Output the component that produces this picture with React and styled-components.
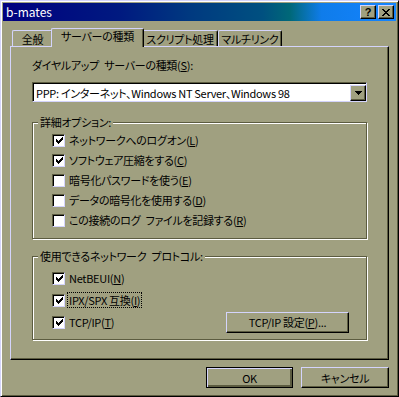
import React from 'react'
import styled, { createGlobalStyle, css } from 'styled-components'

const FACE = '#a0a080'
const LIGHT = '#d4d4fc'
const WHITE = '#ffffff'
const SHADOW = '#5c5c40'
const DARK = '#000000'

const GlobalStyle = createGlobalStyle`
  html, body {
    margin: 0;
    padding: 0;
    background: ${FACE};
  }
  body {
    font-family: "Noto Sans CJK JP", "Liberation Sans", sans-serif;
    font-size: 11px;
    letter-spacing: -0.3px;
    color: #000;
    font-feature-settings: "palt" 1;
  }
  * {
    box-sizing: border-box;
  }
`

const raised = css`
  border: 1px solid;
  border-color: ${LIGHT} ${DARK} ${DARK} ${LIGHT};
  box-shadow: inset -1px -1px 0 ${SHADOW};
  background: ${FACE};
`

const sunken = css`
  border: 1px solid;
  border-color: ${SHADOW} ${LIGHT} ${LIGHT} ${SHADOW};
  box-shadow: inset 1px 1px 0 ${DARK};
`

const Window = styled.div`
  width: 399px;
  height: 397px;
  background: ${FACE};
  border: 1px solid;
  border-color: ${LIGHT} ${DARK} ${DARK} ${LIGHT};
  box-shadow: inset 1px 1px 0 ${WHITE}, inset -1px -1px 0 ${SHADOW};
  padding: 2px;
  display: flex;
  flex-direction: column;
`

const TitleBar = styled.div`
  height: 18px;
  flex: none;
  display: flex;
  align-items: center;
  padding: 0 2px 0 2px;
  background: linear-gradient(
    to right,
    #000080 0%,
    #001a80 30%,
    #003a80 48%,
    #005080 66%,
    #006878 73%,
    #0f7cea 81%,
    #1484ff 100%
  );
  color: #fff;
`

const TitleText = styled.span`
  flex: 1;
  font-size: 12px;
  letter-spacing: 0;
  line-height: 14px;
  padding-left: 1px;
`

const TitleButtons = styled.div`
  display: flex;
  gap: 2px;
`

const TitleButton = styled.div`
  ${raised}
  width: 16px;
  height: 14px;
  display: flex;
  align-items: center;
  justify-content: center;
  color: #000;
  font-family: "Liberation Sans", sans-serif;
  font-weight: bold;
  font-size: 11px;
  line-height: 11px;
`

const Body = styled.div`
  flex: 1;
  display: flex;
  flex-direction: column;
  padding: 7px 7px 0 7px;
`

const TabRow = styled.div`
  height: 18px;
  display: flex;
  align-items: flex-end;
  padding-left: 2px;
  position: relative;
  z-index: 1;
`

const Tab = styled.div`
  width: ${p => p.$w}px;
  height: 16px;
  border-top: 1px solid ${LIGHT};
  border-left: 1px solid ${LIGHT};
  border-right: 1px solid ${DARK};
  box-shadow: inset -1px 0 0 ${SHADOW};
  border-radius: 2px 2px 0 0;
  background: ${FACE};
  text-align: center;
  line-height: 14px;
  padding-top: 1px;
  white-space: nowrap;
  ${p =>
    p.$active &&
    css`
      height: 19px;
      margin: 0 -2px -1px;
      width: ${p.$w + 4}px;
      padding-top: 0;
      position: relative;
    `}
`

const Panel = styled.div`
  ${raised}
  height: 314px;
  flex: none;
  padding: 11px 21px 0 21px;
  display: flex;
  flex-direction: column;
`

const FieldLabel = styled.div`
  line-height: 14px;
  margin-bottom: 10px;
`

const Key = styled.span`
  text-decoration: underline;
  text-underline-offset: 1px;
`

const Combo = styled.div`
  ${sunken}
  height: 20px;
  background: ${WHITE};
  display: flex;
  align-items: center;
  padding: 1px 0 0 3px;
  margin-bottom: 20px;
`

const ComboText = styled.span`
  flex: 1;
  line-height: 14px;
  white-space: nowrap;
`

const DropButton = styled.div`
  ${raised}
  width: 16px;
  height: 16px;
  display: flex;
  align-items: center;
  justify-content: center;
`

const Group = styled.div`
  position: relative;
  border: 1px solid ${SHADOW};
  box-shadow: 1px 1px 0 ${WHITE}, inset 1px 1px 0 ${WHITE};
  height: ${p => p.$h}px;
  padding: ${p => p.$pt}px 17px 0 19px;
  margin-top: ${p => p.$mt || 0}px;
`

const Legend = styled.span`
  position: absolute;
  top: -8px;
  left: 5px;
  padding: 0 2px;
  background: ${FACE};
  line-height: 14px;
  white-space: nowrap;
`

const Row = styled.div`
  height: ${p => p.$h}px;
  display: flex;
  align-items: center;
`

const Box = styled.span`
  ${sunken}
  width: 13px;
  height: 13px;
  flex: none;
  background: ${WHITE};
  display: flex;
  align-items: center;
  justify-content: center;
  padding: 1px 0 0 1px;
`

const RowLabel = styled.span`
  margin-left: 4px;
  line-height: 14px;
  white-space: nowrap;
  ${p =>
    p.$focus &&
    css`
      outline: 1px dotted #000;
      outline-offset: 0;
      padding: 0 1px;
      margin-left: 3px;
    `}
`

const PushButton = styled.div`
  ${raised}
  width: ${p => p.$w}px;
  height: 21px;
  display: flex;
  align-items: center;
  justify-content: center;
  line-height: 14px;
  margin-left: ${p => (p.$push ? 'auto' : '0')};
  ${p =>
    p.$default &&
    css`
      border-color: ${DARK};
      box-shadow: inset 1px 1px 0 ${LIGHT}, inset -1px -1px 0 ${SHADOW},
        inset -2px -2px 0 ${SHADOW};
    `}
`

const Footer = styled.div`
  flex: 1;
  display: flex;
  justify-content: flex-end;
  gap: 8px;
  padding: 7px 0 0 0;
`

const CheckMark = () => (
  <svg width="7" height="7" viewBox="0 0 7 7" shapeRendering="crispEdges">
    <path
      d="M0 2h1v3H0z M1 3h1v3H1z M2 4h1v3H2z M3 3h1v3H3z M4 2h1v3H4z M5 1h1v3H5z M6 0h1v3H6z"
      fill="#000"
    />
  </svg>
)

const Checkbox = ({ checked }) => <Box>{checked && <CheckMark />}</Box>

const CheckRow = ({ h, checked, focus, children, extra }) => (
  <Row $h={h}>
    <Checkbox checked={checked} />
    <RowLabel $focus={focus}>{children}</RowLabel>
    {extra}
  </Row>
)

const options = [
  { text: 'ネットワークへのログオン', key: 'L', checked: true },
  { text: 'ソフトウェア圧縮をする', key: 'C', checked: true },
  { text: '暗号化パスワードを使う', key: 'E', checked: false },
  { text: 'データの暗号化を使用する', key: 'D', checked: false },
  { text: 'この接続のログ\u2002ファイルを記録する', key: 'R', checked: false },
]

export default function App() {
  return (
    <>
      <GlobalStyle />
      <Window>
        <TitleBar>
          <TitleText>b-mates</TitleText>
          <TitleButtons>
            <TitleButton>?</TitleButton>
            <TitleButton>
              <svg width="8" height="7" viewBox="0 0 8 7" shapeRendering="crispEdges">
                <path
                  d="M0 0h2v1H0z M6 0h2v1H6z M1 1h2v1H1z M5 1h2v1H5z M2 2h4v1H2z M3 3h2v1H3z M2 4h4v1H2z M1 5h2v1H1z M5 5h2v1H5z M0 6h2v1H0z M6 6h2v1H6z"
                  fill="#000"
                />
              </svg>
            </TitleButton>
          </TitleButtons>
        </TitleBar>
        <Body>
          <TabRow>
            <Tab $w={41}>全般</Tab>
            <Tab $w={89} $active>
              サーバーの種類
            </Tab>
            <Tab $w={76}>スクリプト処理</Tab>
            <Tab $w={64}>マルチリンク</Tab>
          </TabRow>
          <Panel>
            <FieldLabel>
              ダイヤルアップ{'\u2002'}サーバーの種類(<Key>S</Key>):
            </FieldLabel>
            <Combo>
              <ComboText>PPP: インターネット、Windows NT Server、Windows 98</ComboText>
              <DropButton>
                <svg width="7" height="4" viewBox="0 0 7 4" shapeRendering="crispEdges">
                  <path d="M0 0h7v1H0z M1 1h5v1H1z M2 2h3v1H2z M3 3h1v1H3z" fill="#000" />
                </svg>
              </DropButton>
            </Combo>
            <Group $h={117} $pt={7}>
              <Legend>詳細オプション:</Legend>
              {options.map(o => (
                <CheckRow key={o.key} h={20} checked={o.checked}>
                  {o.text}(<Key>{o.key}</Key>)
                </CheckRow>
              ))}
            </Group>
            <Group $h={84} $pt={10} $mt={17}>
              <Legend>使用できるネットワーク{'\u2002'}プロトコル:</Legend>
              <CheckRow h={22} checked>
                NetBEUI(<Key>N</Key>)
              </CheckRow>
              <CheckRow h={22} checked focus>
                IPX/SPX 互換(<Key>I</Key>)
              </CheckRow>
              <CheckRow
                h={22}
                checked
                extra={
                  <PushButton $w={123} $push>
                    TCP/IP 設定(<Key>P</Key>)...
                  </PushButton>
                }
              >
                TCP/IP(<Key>T</Key>)
              </CheckRow>
            </Group>
          </Panel>
          <Footer>
            <PushButton $w={87} $default>
              OK
            </PushButton>
            <PushButton $w={88}>キャンセル</PushButton>
          </Footer>
        </Body>
      </Window>
    </>
  )
}
